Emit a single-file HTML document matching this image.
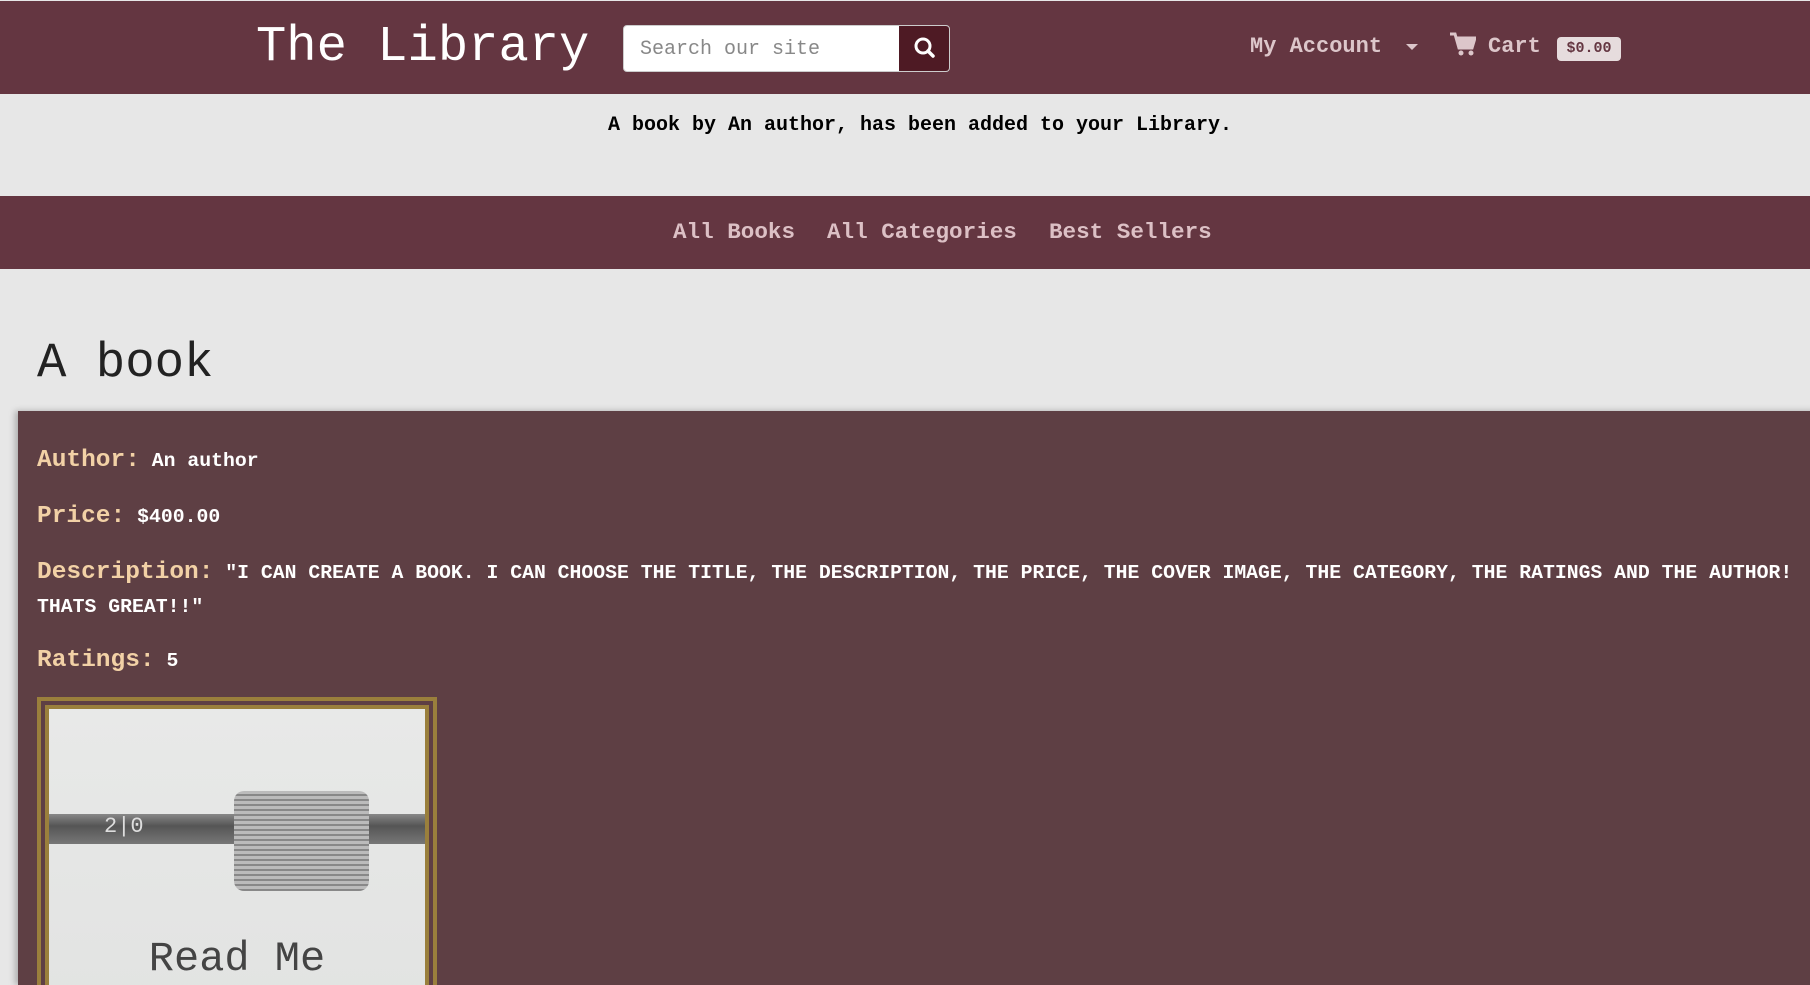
<!DOCTYPE html>
<html><head><meta charset="utf-8"><style>
*{margin:0;padding:0;box-sizing:border-box}
html,body{width:1810px;height:985px;overflow:hidden;background:#e7e7e7;font-family:"Liberation Mono","Courier New",monospace}
.top{position:absolute;top:1px;left:0;width:1810px;height:93px;background:#643641}
.title{position:absolute;left:256px;top:19px;font-size:50.5px;color:#fff;line-height:56px}
.search{position:absolute;left:623px;top:24px;width:327px;height:47px;background:#fff;border:1px solid #ccc;border-radius:4px;overflow:hidden}
.search span{position:absolute;left:16px;top:12px;font-size:20px;color:#888}
.search .btn{position:absolute;right:0;top:0;width:50px;height:47px;background:#4e1a24}
.acct{position:absolute;left:1250px;top:33px;font-size:22px;font-weight:bold;color:#dcc6ca}
.caret{position:absolute;left:1406px;top:43px;border-left:6px solid transparent;border-right:6px solid transparent;border-top:6px solid #dcc6ca}
.cart{position:absolute;left:1488px;top:33px;font-size:22px;font-weight:bold;color:#dcc6ca}
.badge{position:absolute;left:1557px;top:36px;width:64px;height:24px;background:#e6dcdd;border-radius:4px;font-size:15px;font-weight:bold;color:#643641;text-align:center;line-height:24px}
.flash{position:absolute;top:114px;left:0;width:1810px;text-align:center;font-size:20px;font-weight:bold;color:#000;padding-left:30px}
.nav{position:absolute;top:196px;left:0;width:1810px;height:73px;background:#643641}
.nav span{position:absolute;top:23px;font-size:22.6px;font-weight:bold;color:#dcc0c5}
h1{position:absolute;left:37px;top:333px;font-size:49px;font-weight:normal;color:#222;line-height:60px}
.panel{position:absolute;left:18px;top:411px;width:1830px;height:574px;background:#5e3f44;box-shadow:-3px 0 6px rgba(0,0,0,.25);overflow:hidden}
.row{position:absolute;left:19px;white-space:nowrap;color:#fff;font-weight:bold;font-size:19.8px}
.row b{color:#f2d1a6;font-size:24.5px}
.frame{position:absolute;left:19px;top:286px;width:400px;height:320px;border:4px solid #9a7f3c;padding:4px}
.inner{width:100%;height:100%;border:4px solid #9a7f3c;background:linear-gradient(#e8e9e8,#e2e3e2);position:relative;overflow:hidden}
</style></head><body>
<div class="top">
<div class="title">The Library</div>
<div class="search"><span>Search our site</span><div class="btn"><svg width="50" height="47" viewBox="0 0 50 47"><circle cx="24" cy="20" r="7" fill="none" stroke="#fff" stroke-width="3"/><line x1="29" y1="25" x2="34" y2="30" stroke="#fff" stroke-width="3.5" stroke-linecap="round"/></svg></div></div>
<div class="acct">My Account</div><div class="caret"></div>
<svg style="position:absolute;left:1449px;top:31px" width="27" height="25" viewBox="0 0 27 25"><path d="M1 2h5l4 14h13l3-10H8" fill="none" stroke="#dcc6ca" stroke-width="3"/><path d="M8 6h18l-3 10H10z" fill="#dcc6ca"/><circle cx="12" cy="21" r="2.5" fill="#dcc6ca"/><circle cx="22" cy="21" r="2.5" fill="#dcc6ca"/></svg>
<div class="cart">Cart</div>
<div class="badge">$0.00</div>
</div>
<div class="flash">A book by An author, has been added to your Library.</div>
<div class="nav"><span style="left:673px">All Books</span><span style="left:827px">All Categories</span><span style="left:1049px">Best Sellers</span></div>
<h1>A book</h1>
<div class="panel">
<div class="row" style="top:36px"><b>Author:</b> An author</div>
<div class="row" style="top:92px"><b>Price:</b> $400.00</div>
<div class="row" style="top:148px"><b>Description:</b> "I CAN CREATE A BOOK. I CAN CHOOSE THE TITLE, THE DESCRIPTION, THE PRICE, THE COVER IMAGE, THE CATEGORY, THE RATINGS AND THE AUTHOR!</div>
<div class="row" style="top:185px">THATS GREAT!!"</div>
<div class="row" style="top:236px"><b>Ratings:</b> 5</div>
<div class="frame"><div class="inner">
<div style="position:absolute;left:0;top:105px;width:100%;height:30px;background:linear-gradient(#888,#555 40%,#777)"></div>
<div style="position:absolute;left:185px;top:82px;width:135px;height:100px;border-radius:10px;background:repeating-linear-gradient(#bbb 0 3px,#888 3px 5px)"></div>
<div style="position:absolute;left:55px;top:105px;color:#ddd;font-size:22px">2|0</div>
<div style="position:absolute;left:0;top:226px;width:100%;text-align:center;font-size:42px;color:#444">Read Me</div>
</div></div>
</div>
</body></html>
